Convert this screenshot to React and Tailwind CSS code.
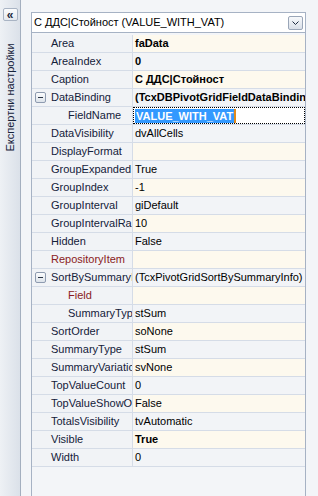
import React from "react";

const rows = [
  { l: "Area", v: "faData", bold: true },
  { l: "AreaIndex", v: "0", bold: true },
  { l: "Caption", v: "С ДДС|Стойност", bold: true },
  { l: "DataBinding", v: "(TcxDBPivotGridFieldDataBinding)", bold: true, exp: true },
  { l: "FieldName", v: "VALUE_WITH_VAT", sel: true, indent: true },
  { l: "DataVisibility", v: "dvAllCells" },
  { l: "DisplayFormat", v: "" },
  { l: "GroupExpanded", v: "True" },
  { l: "GroupIndex", v: "-1" },
  { l: "GroupInterval", v: "giDefault" },
  { l: "GroupIntervalRange", v: "10" },
  { l: "Hidden", v: "False" },
  { l: "RepositoryItem", v: "", red: true },
  { l: "SortBySummaryInfo", v: "(TcxPivotGridSortBySummaryInfo)", exp: true },
  { l: "Field", v: "", red: true, indent: true },
  { l: "SummaryType", v: "stSum", indent: true },
  { l: "SortOrder", v: "soNone" },
  { l: "SummaryType", v: "stSum" },
  { l: "SummaryVariation", v: "svNone" },
  { l: "TopValueCount", v: "0" },
  { l: "TopValueShowOthers", v: "False" },
  { l: "TotalsVisibility", v: "tvAutomatic" },
  { l: "Visible", v: "True", bold: true },
  { l: "Width", v: "0" },
];

function Row({ r, i }) {
  const odd = i % 2 === 1;
  return (
    <div className="flex h-[18px] border-b border-[#d5dce7]">
      <div className="relative flex w-[100px] shrink-0 items-center overflow-hidden whitespace-nowrap bg-[#f1f3f6]">
        {r.exp && (
          <div className="absolute left-[3px] top-[3px] flex h-[11px] w-[11px] items-center justify-center rounded-[2px] border border-[#8e9bb0] bg-gradient-to-b from-[#fbfcfd] to-[#dde3ea]">
            <div className="h-[1px] w-[5px] bg-[#2a3545]" />
          </div>
        )}
        <span
          className={
            (r.indent ? "pl-[36px] " : "pl-[19px] ") +
            (r.red ? "text-[#8a1b22]" : "text-[#14213a]")
          }
        >
          {r.l}
        </span>
      </div>
      <div className="w-px shrink-0 bg-[#d5dce7]" />
      <div
        className={
          "relative flex min-w-0 flex-1 items-center overflow-hidden whitespace-nowrap pl-[2px] " +
          (r.sel ? "bg-white" : odd ? "bg-[#f2f4f7]" : "bg-[#fdf9ee]")
        }
      >
        {r.sel ? (
          <div className="absolute inset-0 flex items-center border border-dotted border-black pl-[1px]">
            <span className="bg-[#3399ff] px-[1px] font-bold leading-[14px] text-white">
              {r.v}
            </span>
            <span className="h-[14px] w-[2px] bg-[#e08a1e]" />
          </div>
        ) : (
          <span className={r.bold ? "font-bold text-black" : "text-black"}>{r.v}</span>
        )}
      </div>
    </div>
  );
}

export default function App() {
  return (
    <div
      className="flex h-[496px] w-[318px] overflow-hidden text-[11px] leading-none"
      style={{ fontFamily: '"Liberation Sans", Arial, sans-serif' }}
    >
      {/* sidebar */}
      <div className="relative flex w-[21px] shrink-0 flex-col items-center border-r border-[#a4afbf] bg-gradient-to-r from-[#eef1f5] to-[#dbe1e9]">
        <div className="mt-[8px] flex h-[13px] w-[15px] items-center justify-center rounded-[2px] border border-[#a9b4c4] bg-gradient-to-b from-[#fbfcfd] to-[#e4e8ee] text-[12px] font-bold leading-none text-[#1c2a40]">
          «
        </div>
        <div className="mt-[20px] flex h-[112px] w-[14px] items-center justify-center">
          <span className="-rotate-90 whitespace-nowrap text-[11px] text-[#14213a]">
            Експертни настройки
          </span>
        </div>
      </div>

      {/* panel */}
      <div className="flex min-w-0 flex-1 flex-col bg-[#f3f5f8] pl-[10px] pr-[12px] pt-[12px]">
        {/* combo */}
        <div className="flex h-[21px] shrink-0 items-center border border-[#a6b2c4] bg-white pl-[2px] pr-[2px]">
          <span className="flex-1 whitespace-nowrap text-[#000]">
            С ДДС|Стойност (VALUE_WITH_VAT)
          </span>
          <div className="flex h-[14px] w-[15px] items-center justify-center rounded-[2px] border border-[#9aa6b8] bg-gradient-to-b from-[#f7f9fb] to-[#d9dfe8]">
            <svg width="7" height="4" viewBox="0 0 7 4">
              <path d="M0.5 0.5 L3.5 3.5 L6.5 0.5" fill="none" stroke="#1c2a40" strokeWidth="1" />
            </svg>
          </div>
        </div>
        {/* grid */}
        <div className="flex flex-1 flex-col border-x border-[#a6b2c4] pt-[2px]">
          {rows.map((r, i) => (
            <Row key={i} r={r} i={i} />
          ))}
        </div>
      </div>
    </div>
  );
}
